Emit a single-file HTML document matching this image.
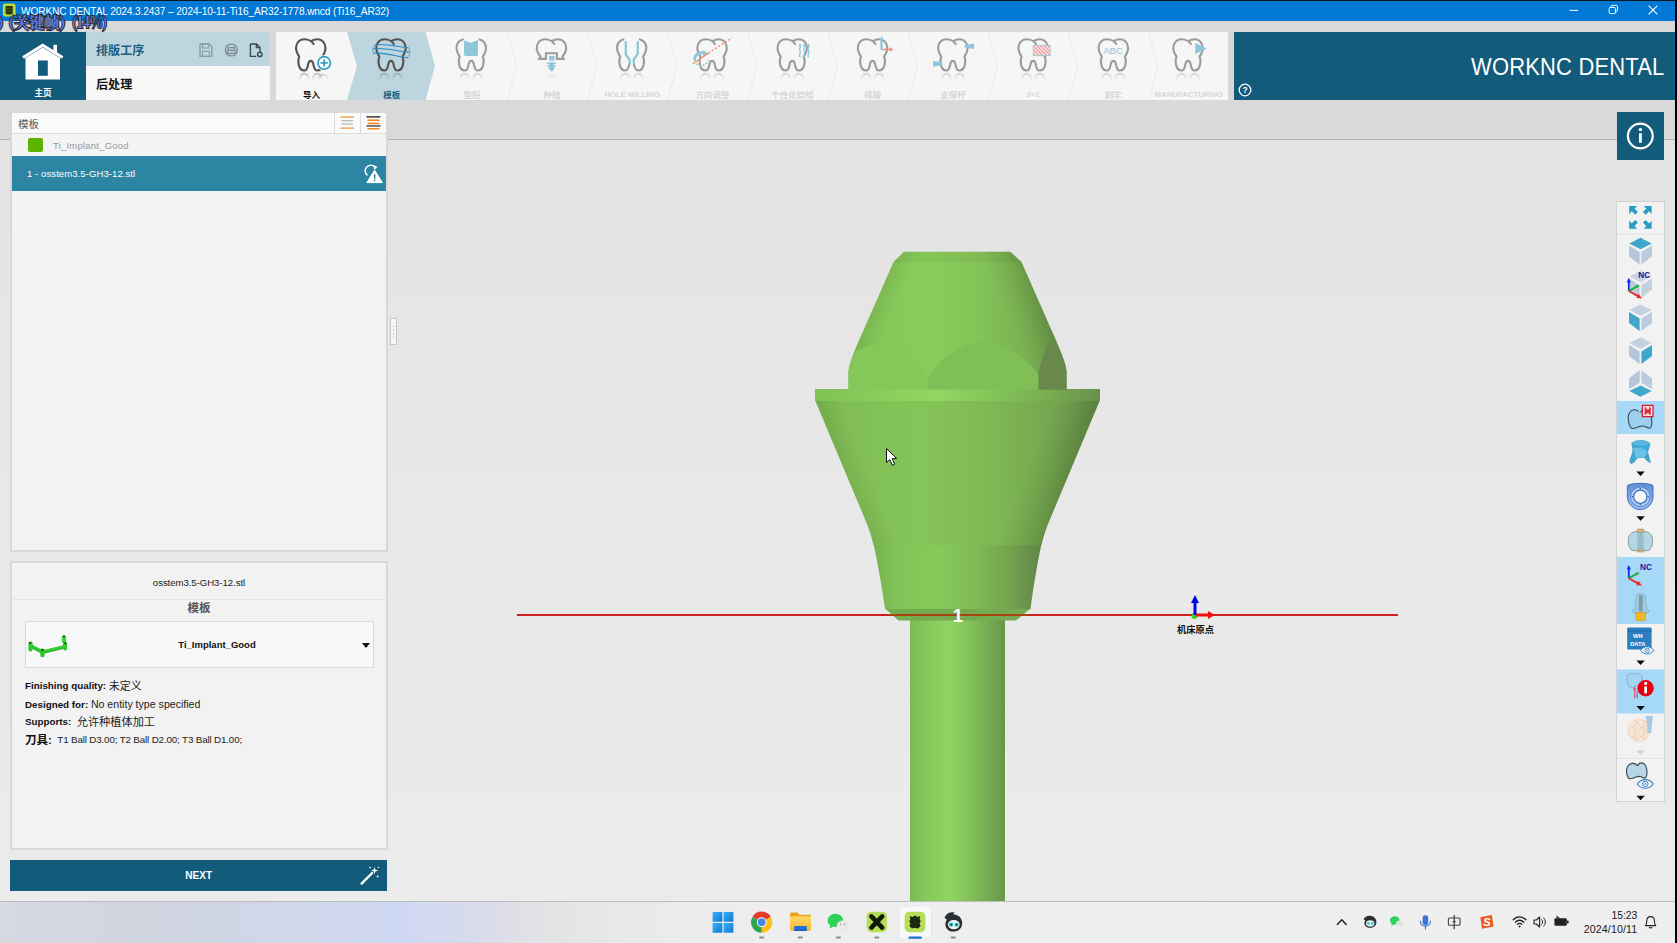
<!DOCTYPE html>
<html lang="zh">
<head>
<meta charset="utf-8">
<title>WORKNC DENTAL</title>
<style>
*{box-sizing:border-box;margin:0;padding:0}
html,body{width:1677px;height:943px;overflow:hidden;background:#e9e9e9;font-family:"Liberation Sans","Noto Sans CJK SC",sans-serif;}
.abs{position:absolute}
#root{position:relative;width:1677px;height:943px;overflow:hidden;background:linear-gradient(to bottom,#e3e3e3 140px,#e8e8e8 500px,#ebebeb 900px)}
#titlebar{left:0;top:0;width:1677px;height:21px;background:#0078d4;border-top:1px solid #101820}
#titletext{left:21px;top:5.8px;font-size:10.15px;color:#fff;white-space:nowrap;letter-spacing:-0.1px}
#overlay{left:0;top:11px;font-size:15px;font-weight:700;color:#6283f5;white-space:nowrap;font-family:"Noto Serif CJK SC","Liberation Serif",serif;height:24px;width:130px;
 -webkit-text-stroke:2.2px #2a2a2a;paint-order:stroke fill}
#overlay span{position:absolute;top:0;transform-origin:0 50%}
#band{left:0;top:21px;width:1677px;height:119px;background:#d9d9d9;border-bottom:1px solid #b4b4b4}
#home{left:0;top:32px;width:86px;height:68px;background:#135b7a}
#homelbl{left:0;top:85.5px;width:86px;text-align:center;color:#fff;font-size:8.6px;font-weight:bold}
#proc1{left:86px;top:32px;width:184px;height:34px;background:#bdd5df}
#proc2{left:86px;top:66px;width:184px;height:34px;background:#f7f7f7}
#proc1 span{position:absolute;left:10px;top:8.5px;font-size:12.1px;font-weight:bold;color:#1d5f7e}
#proc2 span{position:absolute;left:10px;top:8.5px;font-size:12.1px;font-weight:bold;color:#111}
#steps{left:276px;top:32px;width:952px;height:68px;background:#f6f6f6}
#brand{left:1234px;top:32px;width:443px;height:68px;background:#135b7a}
#brandtxt{right:12.7px;top:21.4px;color:#fff;font-size:24px;letter-spacing:0.2px;white-space:nowrap;transform:scaleX(0.915);transform-origin:100% 50%}
#info{left:1617px;top:112px;width:47px;height:48px;background:#135b7a}
#lp1{left:10px;top:112px;width:378px;height:440px;background:#f2f2f2;border:2px solid #d8d8d8;border-top-width:1px}
#lp1h{left:0;top:0;width:374px;height:21px;background:#fafafa;border-bottom:1px solid #dcdcdc}
#lp1h span{position:absolute;left:6px;top:3px;font-size:10.5px;color:#555}
#row1{left:0;top:21px;width:374px;height:22px;background:#f4f4f4}
#row2{left:0;top:43px;width:374px;height:35px;background:#2b85a3}
#lp2{left:10px;top:561px;width:378px;height:289px;background:#f2f2f2;border:2px solid #d8d8d8}
#next{left:10.4px;top:860px;width:376.6px;height:30.5px;background:#135b7a;color:#fff;font-size:10px;font-weight:bold;text-align:center;line-height:31px}
#rtb{left:1616px;top:201px;width:49px;height:601px;background:#f2f2f2;border:1px solid #d2d2d2}
#taskbar{left:0;top:901px;width:1677px;height:42px;background:linear-gradient(to right,#d6d9e2 0,#d1d5e0 150px,#d0d7ea 300px,#cfd8f3 400px,#d4d9ee 450px,#dcdde8 500px,#e3e3e6 545px,#e8e8e8 610px,#ececec 700px,#eeeeee 800px,#efefef 100%);border-top:1px solid #bdbdbd}
.ln{left:13px;font-size:9.8px;color:#222;white-space:nowrap;line-height:14px;height:14px}
.ln .cj{line-height:14px;display:inline-block;vertical-align:top;position:relative;top:-0.5px}
.ln b{color:#111}
.steplbl{position:absolute;top:89px;width:90px;text-align:center;font-size:7.5px;font-weight:bold;color:#dcdcdc;white-space:nowrap}
</style>
</head>
<body>
<div id="root">
<div id="band" class="abs"></div>
<div id="titlebar" class="abs"></div>
<svg class="abs" style="left:0;top:1px" width="1677" height="20" viewBox="0 1 1677 20" fill="none">
<rect x="2.8" y="3.6" width="12.8" height="12.8" rx="2.6" fill="#b9d83a"/><path d="M5.6 6 H12.8 V13.4 L11.4 14.4 H7 L5.6 13.4 Z" fill="#283814"/><path d="M5.6 8.4 H12.8 M5.6 10.8 H12.8" stroke="#566a26" stroke-width="0.6"/>
<path d="M1569.6 10.4 H1578.2" stroke="#fff" stroke-width="1"/>
<rect x="1609.2" y="7.4" width="6.2" height="6.2" rx="1" stroke="#fff" stroke-width="1"/><path d="M1611 7.2 V6.4 C1611 5.8 1611.4 5.4 1612 5.4 H1616.2 C1616.8 5.4 1617.4 5.8 1617.4 6.4 V10.6 C1617.4 11.2 1616.8 11.8 1616.2 11.8 H1615.6" stroke="#fff" stroke-width="1"/>
<path d="M1648.6 5.6 L1657.4 14.4 M1657.4 5.6 L1648.6 14.4" stroke="#fff" stroke-width="1.1"/>
</svg>
<div id="titletext" class="abs">WORKNC DENTAL 2024.3.2437 – 2024-10-11-Ti16_AR32-1778.wncd (Ti16_AR32)</div>
<!--VIEWPORT-->
<svg class="abs" style="left:0;top:0" width="1677" height="943" viewBox="0 0 1677 943">
<defs>
<linearGradient id="gTop" gradientUnits="userSpaceOnUse" x1="848" y1="0" x2="1067" y2="0">
<stop offset="0" stop-color="#7fbf54"/><stop offset="0.12" stop-color="#85c658"/><stop offset="0.38" stop-color="#8acc5c"/><stop offset="0.6" stop-color="#84c358"/><stop offset="0.8" stop-color="#7bb253"/><stop offset="0.93" stop-color="#71a04e"/><stop offset="1" stop-color="#6d994c"/>
</linearGradient>
<linearGradient id="gFl" gradientUnits="userSpaceOnUse" x1="815" y1="0" x2="1100" y2="0">
<stop offset="0" stop-color="#7ab851"/><stop offset="0.12" stop-color="#81bf55"/><stop offset="0.38" stop-color="#85c458"/><stop offset="0.6" stop-color="#7fba55"/><stop offset="0.8" stop-color="#76a950"/><stop offset="0.93" stop-color="#6e9b4d"/><stop offset="1" stop-color="#6b954c"/>
</linearGradient>
<linearGradient id="gRim" gradientUnits="userSpaceOnUse" x1="815" y1="0" x2="1100" y2="0">
<stop offset="0" stop-color="#80c255"/><stop offset="0.2" stop-color="#88cb5a"/><stop offset="0.42" stop-color="#92d663"/><stop offset="0.6" stop-color="#86c65a"/><stop offset="0.8" stop-color="#79b052"/><stop offset="1" stop-color="#688f4b"/>
</linearGradient>
<linearGradient id="gLow" gradientUnits="userSpaceOnUse" x1="873" y1="0" x2="1042" y2="0">
<stop offset="0" stop-color="#76b24f"/><stop offset="0.12" stop-color="#82c157"/><stop offset="0.38" stop-color="#88c95b"/><stop offset="0.6" stop-color="#80bc56"/><stop offset="0.8" stop-color="#73a54e"/><stop offset="0.93" stop-color="#678f4a"/><stop offset="1" stop-color="#638748"/>
</linearGradient>
<linearGradient id="gSh" gradientUnits="userSpaceOnUse" x1="910" y1="0" x2="1005" y2="0">
<stop offset="0" stop-color="#7ab952"/><stop offset="0.15" stop-color="#85c759"/><stop offset="0.42" stop-color="#90d461"/><stop offset="0.62" stop-color="#84c359"/><stop offset="0.85" stop-color="#74a850"/><stop offset="1" stop-color="#69964b"/>
</linearGradient>
<linearGradient id="eR1" gradientUnits="userSpaceOnUse" x1="1070.7" y1="472.5" x2="1031.8" y2="456.8"><stop offset="0" stop-color="#1a2a10" stop-opacity="0.2"/><stop offset="0.5" stop-color="#1a2a10" stop-opacity="0.07"/><stop offset="1" stop-color="#1a2a10" stop-opacity="0"/></linearGradient>
<linearGradient id="eL1" gradientUnits="userSpaceOnUse" x1="844.3" y1="472.5" x2="866.6" y2="463.5"><stop offset="0" stop-color="#1a2a10" stop-opacity="0.09"/><stop offset="1" stop-color="#1a2a10" stop-opacity="0"/></linearGradient>
<linearGradient id="eR2" gradientUnits="userSpaceOnUse" x1="1039.7" y1="303.5" x2="1007.7" y2="317.6"><stop offset="0" stop-color="#1a2a10" stop-opacity="0.17"/><stop offset="0.5" stop-color="#1a2a10" stop-opacity="0.06"/><stop offset="1" stop-color="#1a2a10" stop-opacity="0"/></linearGradient>
<linearGradient id="eL2" gradientUnits="userSpaceOnUse" x1="875.3" y1="303.5" x2="893.6" y2="311.5"><stop offset="0" stop-color="#1a2a10" stop-opacity="0.08"/><stop offset="1" stop-color="#1a2a10" stop-opacity="0"/></linearGradient>
</defs>
<!-- shaft -->
<rect x="910" y="618" width="95" height="283" fill="url(#gSh)"/>
<!-- bottom chamfer -->
<path d="M885 608.5 L1030.5 608.5 L1016 620.5 L898.5 620.5 Z" fill="#75ab50"/>
<!-- lower collar -->
<path d="M873.5 544 L1041.5 544 C1037 565 1033 590 1030.5 609 L885 609 C882.5 590 878 565 873.5 544 Z" fill="url(#gLow)"/>
<!-- flange cone -->
<path d="M815 400 L1100 400 L1048 524 C1045 532 1043 538 1041.5 545 L873.5 545 C872 538 870 532 867 524 Z" fill="url(#gFl)"/>
<path d="M815 400 L1100 400 L1048 524 C1045 532 1043 538 1041.5 545 L873.5 545 C872 538 870 532 867 524 Z" fill="url(#eR1)"/><path d="M815 400 L1100 400 L1048 524 C1045 532 1043 538 1041.5 545 L873.5 545 C872 538 870 532 867 524 Z" fill="url(#eL1)"/>
<!-- flange rim -->
<path d="M815 389 L1100 389 L1100 401 L815 401 Z" fill="url(#gRim)"/>
<!-- top cone -->
<path d="M904 251.8 L1010.5 251.8 L1021.5 262 L1058 345 C1063 357 1066 365 1066.5 372 L1066.5 389.5 L848.5 389.5 L848.5 372 C849 365 852 357 857 345 L893.5 262 Z" fill="url(#gTop)"/>
<path d="M904 251.8 L1010.5 251.8 L1021.5 262 L1058 345 C1063 357 1066 365 1066.5 372 L1066.5 389.5 L848.5 389.5 L848.5 372 C849 365 852 357 857 345 L893.5 262 Z" fill="url(#eR2)"/><path d="M904 251.8 L1010.5 251.8 L1021.5 262 L1058 345 C1063 357 1066 365 1066.5 372 L1066.5 389.5 L848.5 389.5 L848.5 372 C849 365 852 357 857 345 L893.5 262 Z" fill="url(#eL2)"/>
<!-- top chamfer shading -->
<path d="M904 251.8 L1010.5 251.8 L1021.5 262 L893.5 262 Z" fill="#000" opacity="0.035"/>
<!-- hex facets -->
<path d="M848.5 389.5 L848.5 372 C849 365 852 358 856 351 C868 345 886 342 899 343 C910 352 921 365 928 378 L928 389.5 Z" fill="#86c75a"/>
<path d="M928 389.5 L928 378 C940 358 960 344 981 341 C1004 344 1026 358 1038.5 374 L1038.5 389.5 Z" fill="#80bf56"/>
<path d="M1038.5 389.5 L1038.5 374 C1041 362 1044 352 1048 343 L1057 345 C1063 357 1066 365 1066.5 372 L1066.5 389.5 Z" fill="#68894b"/>
<!-- red line -->
<rect x="517" y="614" width="881" height="2" fill="#d01f1f"/>
<rect x="888" y="614" width="141" height="2" fill="#a9430f"/>
<text x="957.8" y="622.4" text-anchor="middle" font-family="Liberation Sans, sans-serif" font-size="18.5" font-weight="bold" fill="#fff">1</text>
<!-- origin marker -->
<circle cx="1194.5" cy="616" r="3" fill="#2fd32f"/>
<rect x="1193.5" y="602" width="3" height="13" fill="#0000e6"/>
<path d="M1191 603 L1195 595 L1199 603 Z" fill="#0000e6"/>
<rect x="1196" y="613.5" width="13" height="3" fill="#f01010"/>
<path d="M1208 611 L1215 615 L1208 619 Z" fill="#f01010"/>
<text x="1195.5" y="633.4" text-anchor="middle" font-family="Liberation Sans, Noto Sans CJK SC, sans-serif" font-size="9.3" font-weight="bold" fill="#111">机床原点</text>
<!-- cursor -->
<path d="M886.5 448.5 L886.5 462.5 L889.8 459.6 L892.3 465.3 L894.6 464.3 L892.2 458.7 L896.6 458.5 Z" fill="#fff" stroke="#111" stroke-width="1" stroke-linejoin="round"/>
</svg>
<!-- splitter handle -->
<div class="abs" style="left:390px;top:318px;width:7px;height:27px;background:#f6f6f6;border:1px solid #c6c6c6"></div>
<div class="abs" style="left:392.7px;top:325.6px;width:1.3px;height:1.3px;background:#9a9a9a;box-shadow:0 3.6px 0 #9a9a9a,0 7.2px 0 #9a9a9a,0 10.8px 0 #9a9a9a"></div>
<!--/VIEWPORT-->
<div id="home" class="abs"></div>
<svg class="abs" style="left:0;top:32px" width="86" height="68" viewBox="0 32 86 68">
<path d="M25.5 58 L42.7 47.5 L60 58 L60 79.5 L25.5 79.5 Z" fill="#fff"/>
<path d="M23 57.6 L42.7 45.2 L62.6 57.6" stroke="#fff" stroke-width="3" fill="none" stroke-linejoin="miter"/>
<rect x="53.4" y="44.8" width="3.6" height="9" fill="#fff"/>
<rect x="38" y="60.5" width="9.8" height="15.3" fill="#135b7a"/>
</svg>
<div id="homelbl" class="abs">主页</div>
<div id="proc1" class="abs"><span>排版工序</span></div>
<div id="proc2" class="abs"><span>后处理</span></div>
<svg class="abs" style="left:196px;top:40px" width="72" height="20" viewBox="196 40 72 20" fill="none">
<path d="M200 44 H209 L211.8 46.6 V56.4 H200 Z" stroke="#8b9aa3" stroke-width="1.4"/><rect x="202.4" y="44" width="6" height="4" stroke="#8b9aa3" stroke-width="1.1"/><rect x="202.4" y="51.2" width="7" height="5.2" stroke="#8b9aa3" stroke-width="1.1"/>
<circle cx="231.3" cy="50" r="5.9" stroke="#7d8b93" stroke-width="1.4"/><path d="M228.2 50.2 V47.6 H234.4 V50.2 M227.6 53.4 V50.4 H235 V53.4 Z" stroke="#7d8b93" stroke-width="1.1"/>
<path d="M250.4 44 H256.6 L260 47.4 V52 M256 56.4 H250.4 V44 M256.4 44 V47.6 H260" stroke="#3c4a52" stroke-width="1.4" stroke-linejoin="round"/><circle cx="259.8" cy="54.4" r="2.2" stroke="#3c4a52" stroke-width="1.5"/>
</svg>
<div id="steps" class="abs"></div>
<!--STEPS-->
<svg class="abs" style="left:276px;top:32px" width="952" height="68" viewBox="276 32 952 68">
<defs><linearGradient id="rfa" gradientUnits="userSpaceOnUse" x1="0" y1="35" x2="0" y2="42"><stop offset="0" stop-color="#777" stop-opacity="0.42"/><stop offset="1" stop-color="#777" stop-opacity="0"/></linearGradient><linearGradient id="rfb" gradientUnits="userSpaceOnUse" x1="0" y1="35" x2="0" y2="42"><stop offset="0" stop-color="#9a9a9a" stop-opacity="0.36"/><stop offset="1" stop-color="#9a9a9a" stop-opacity="0"/></linearGradient><linearGradient id="rfc" gradientUnits="userSpaceOnUse" x1="0" y1="35" x2="0" y2="42"><stop offset="0" stop-color="#5fae5f" stop-opacity="0.5"/><stop offset="1" stop-color="#5fae5f" stop-opacity="0"/></linearGradient></defs>
<path d="M347 32 L425.5 32 L435 66 L425.5 100 L347 100 L357 66 Z" fill="#bdd5df"/>
<path d="M507.3 32 L516.8 66 L507.3 100" stroke="#e9e9e9" stroke-width="1" fill="none"/>
<path d="M587.5 32 L597.0 66 L587.5 100" stroke="#e9e9e9" stroke-width="1" fill="none"/>
<path d="M667.6 32 L677.1 66 L667.6 100" stroke="#e9e9e9" stroke-width="1" fill="none"/>
<path d="M747.8 32 L757.2 66 L747.8 100" stroke="#e9e9e9" stroke-width="1" fill="none"/>
<path d="M827.9 32 L837.4 66 L827.9 100" stroke="#e9e9e9" stroke-width="1" fill="none"/>
<path d="M908.1 32 L917.6 66 L908.1 100" stroke="#e9e9e9" stroke-width="1" fill="none"/>
<path d="M988.2 32 L997.7 66 L988.2 100" stroke="#e9e9e9" stroke-width="1" fill="none"/>
<path d="M1068.3 32 L1077.8 66 L1068.3 100" stroke="#e9e9e9" stroke-width="1" fill="none"/>
<path d="M1148.5 32 L1158.0 66 L1148.5 100" stroke="#e9e9e9" stroke-width="1" fill="none"/>
<path d="M1228.7 32 L1238.2 66 L1228.7 100" stroke="#e9e9e9" stroke-width="1" fill="none"/>
<g transform="translate(295.0 38.3)" fill="none" stroke-linecap="round" stroke-linejoin="round"><path d="M18.6 5.8 C17.5 3.8 14 0.9 9.3 0.9 C4 0.9 1 5 1 9.8 C1 13.5 2.6 16 4.2 18.4 C3.2 20.5 3.2 23 3.5 25.2 C4 29 6 32.2 9.5 32.2 C12.5 32.2 12.6 28 13.3 25.2 C13.8 23.4 14.6 22.6 15.75 22.6 C16.9 22.6 17.7 23.4 18.2 25.2 C18.9 28 19 32.2 22 32.2 C25.5 32.2 27.5 29 28 25.2 C28.3 23 28.3 20.5 27.3 18.4 C28.9 16 30.5 13.5 30.5 9.8 C30.5 5 27.5 0.9 22.2 0.9 C19.8 0.9 17.8 1.6 16.4 2.8" stroke="#555" stroke-width="2.1"/><path d="M4.4 42 C5.4 33.4 13 33.4 14 42" stroke="url(#rfa)" stroke-width="2" fill="none" stroke-linecap="butt"/><path d="M17.5 42 C18.5 33.4 26.1 33.4 27.1 42" stroke="url(#rfa)" stroke-width="2" fill="none" stroke-linecap="butt"/><path d="M22.4 42 C24 34.6 31.6 34.6 33.4 42" stroke="url(#rfc)" stroke-width="1.3"/><circle cx="29.2" cy="24.6" r="8" fill="#f6f6f6" stroke="none"/><circle cx="29.2" cy="24.6" r="6.2" fill="#fff" stroke="#2f9fc2" stroke-width="1.7"/><path d="M25.6 24.6 H32.8 M29.2 21 V28.2" stroke="#2f9fc2" stroke-width="1.8" stroke-linecap="butt"/></g>
<g transform="translate(375.2 38.3)" fill="none" stroke-linecap="round" stroke-linejoin="round"><path d="M18.6 5.8 C17.5 3.8 14 0.9 9.3 0.9 C4 0.9 1 5 1 9.8 C1 13.5 2.6 16 4.2 18.4 C3.2 20.5 3.2 23 3.5 25.2 C4 29 6 32.2 9.5 32.2 C12.5 32.2 12.6 28 13.3 25.2 C13.8 23.4 14.6 22.6 15.75 22.6 C16.9 22.6 17.7 23.4 18.2 25.2 C18.9 28 19 32.2 22 32.2 C25.5 32.2 27.5 29 28 25.2 C28.3 23 28.3 20.5 27.3 18.4 C28.9 16 30.5 13.5 30.5 9.8 C30.5 5 27.5 0.9 22.2 0.9 C19.8 0.9 17.8 1.6 16.4 2.8" stroke="#555" stroke-width="2.1"/><path d="M4.4 42 C5.4 33.4 13 33.4 14 42" stroke="url(#rfa)" stroke-width="2" fill="none" stroke-linecap="butt"/><path d="M17.5 42 C18.5 33.4 26.1 33.4 27.1 42" stroke="url(#rfa)" stroke-width="2" fill="none" stroke-linecap="butt"/><path d="M0 6.5 C10 5.0 22 8.5 33 9.5" stroke="#2b8dc4" stroke-width="1.1"/><path d="M-2 10.5 C10 9.0 22 13 34 14" stroke="#2b8dc4" stroke-width="1.1"/><path d="M-1.5 15 C10 13.5 22 18.5 32 19.5" stroke="#2b8dc4" stroke-width="1.1"/><path d="M0 6.5 C-3 9 -3 13 -1.5 15 M33 9.5 C36 12 35 17 32 19.5" stroke="#2b8dc4" stroke-width="0.9" opacity="0.7"/></g>
<g transform="translate(455.5 38.3)" fill="none" stroke-linecap="round" stroke-linejoin="round"><path d="M7.4 1.1 C3.4 2.2 1 5.6 1 9.8 C1 13.5 2.6 16 4.2 18.4 C3.2 20.5 3.2 23 3.5 25.2 C4 29 6 32.2 9.5 32.2 C12.5 32.2 12.6 28 13.3 25.2 C13.8 23.4 14.6 22.6 15.75 22.6" stroke="#9c9c9c" stroke-width="2.1"/><path d="M24 1.1 C28 2.2 30.5 5.6 30.5 9.8 C30.5 13.5 28.9 16 27.3 18.4 C28.3 20.5 28.3 23 28 25.2 C27.5 29 25.5 32.2 22 32.2 C19 32.2 18.9 28 18.2 25.2 C17.7 23.4 16.9 22.6 15.75 22.6" stroke="#9c9c9c" stroke-width="2.1"/><path d="M8.5 2.1 L15.4 4.5 L22.5 1.8 L22.5 15.4 C22.5 17 21.7 17.7 20.2 17.7 L10.8 17.7 C9.3 17.7 8.5 17 8.5 15.4 Z" fill="#8ec6da" stroke="none"/><path d="M4.4 42 C5.4 33.4 13 33.4 14 42" stroke="url(#rfb)" stroke-width="2" fill="none" stroke-linecap="butt"/><path d="M17.5 42 C18.5 33.4 26.1 33.4 27.1 42" stroke="url(#rfb)" stroke-width="2" fill="none" stroke-linecap="butt"/></g>
<g transform="translate(535.7 38.3)" fill="none" stroke-linecap="round" stroke-linejoin="round"><path d="M18.6 5.8 C17.5 3.8 14 0.9 9.3 0.9 C4 0.9 1 5 1 9.8 C1 13.5 2.8 16 4.8 18.2 L3.6 20.6 L10.2 20.6 L10.2 14.9 L21.2 14.9 L21.2 20.6 L27.9 20.6 L26.7 18.2 C28.7 16 30.5 13.5 30.5 9.8 C30.5 5 27.5 0.9 22.2 0.9 C19.8 0.9 17.8 1.6 16.4 2.8" stroke="#9c9c9c" stroke-width="2.1" stroke-linejoin="miter"/><rect x="13.4" y="17.7" width="5.4" height="4.6" fill="#8ec6da" stroke="none"/><path d="M11 24.4 H20.6 V25.7 H11 Z M11.6 26.8 H20 V28.1 H11.6 Z M12.6 29.2 H19 V30.5 H12.6 Z M13.6 24 H18.2 V31.2 L15.9 33.4 L13.6 31.2 Z" fill="#8ec6da" stroke="none"/><path d="M13.4 36.4 H18.4 M12.4 38.6 H19.4" stroke="#8ec6da" stroke-width="1.1" opacity="0.28"/></g>
<g transform="translate(616.0 38.3)" fill="none" stroke-linecap="round" stroke-linejoin="round"><path d="M7.4 1.1 C3.4 2.2 1 5.6 1 9.8 C1 13.5 2.6 16 4.2 18.4 C3.2 20.5 3.2 23 3.5 25.2 C4 29 6 32.2 9.2 32.2 C12 32.2 12.8 28.6 13.4 25.8" stroke="#9c9c9c" stroke-width="2.1"/><path d="M23.9 1.1 C27.9 2.2 30.3 5.6 30.3 9.8 C30.3 13.5 28.7 16 27.1 18.4 C28.1 20.5 28.1 23 27.8 25.2 C27.3 29 25.3 32.2 22.1 32.2 C19.3 32.2 18.5 28.6 17.9 25.8" stroke="#9c9c9c" stroke-width="2.1"/><path d="M9.8 3 V16.2 L13.7 21.6 V25.4 M21.8 3 V15.4 L17.8 21.2 V25.4" stroke="#8ec6da" stroke-width="2.3" stroke-linecap="butt" stroke-linejoin="round"/><path d="M4.4 42 C5.4 33.4 13 33.4 14 42" stroke="url(#rfb)" stroke-width="2" fill="none" stroke-linecap="butt"/><path d="M17.5 42 C18.5 33.4 26.1 33.4 27.1 42" stroke="url(#rfb)" stroke-width="2" fill="none" stroke-linecap="butt"/></g>
<g transform="translate(696.3 38.3)" fill="none" stroke-linecap="round" stroke-linejoin="round"><path d="M18.6 5.8 C17.5 3.8 14 0.9 9.3 0.9 C4 0.9 1 5 1 9.8 C1 13.5 2.6 16 4.2 18.4 C3.2 20.5 3.2 23 3.5 25.2 C4 29 6 32.2 9.5 32.2 C12.5 32.2 12.6 28 13.3 25.2 C13.8 23.4 14.6 22.6 15.75 22.6 C16.9 22.6 17.7 23.4 18.2 25.2 C18.9 28 19 32.2 22 32.2 C25.5 32.2 27.5 29 28 25.2 C28.3 23 28.3 20.5 27.3 18.4 C28.9 16 30.5 13.5 30.5 9.8 C30.5 5 27.5 0.9 22.2 0.9 C19.8 0.9 17.8 1.6 16.4 2.8" stroke="#9c9c9c" stroke-width="2.1"/><path d="M4.4 42 C5.4 33.4 13 33.4 14 42" stroke="url(#rfb)" stroke-width="2" fill="none" stroke-linecap="butt"/><path d="M17.5 42 C18.5 33.4 26.1 33.4 27.1 42" stroke="url(#rfb)" stroke-width="2" fill="none" stroke-linecap="butt"/><path d="M-1.4 22.4 C-2.4 17.6 1.6 13.6 7.4 14.4" stroke="#8ec6da" stroke-width="2.8" stroke-linecap="butt"/><path d="M7 11.6 L12.6 16.2 L6.4 17.6 Z" fill="#8ec6da" stroke="none"/><path d="M0.4 25.4 C3 28.8 9 28.6 11.8 21.6" stroke="#8ec6da" stroke-width="1.7" stroke-dasharray="1.7 1.7" stroke-linecap="butt"/><path d="M-3.5 25.7 L11.9 14.8" stroke="#f0956e" stroke-width="1.5" stroke-linecap="butt"/><path d="M11.9 14.8 L35.8 -0.3" stroke="#f0956e" stroke-width="1.5" stroke-dasharray="2 2" stroke-linecap="butt"/></g>
<g transform="translate(776.5 38.3)" fill="none" stroke-linecap="round" stroke-linejoin="round"><path d="M18.6 5.8 C17.5 3.8 14 0.9 9.3 0.9 C4 0.9 1 5 1 9.8 C1 13.5 2.6 16 4.2 18.4 C3.2 20.5 3.2 23 3.5 25.2 C4 29 6 32.2 9.5 32.2 C12.5 32.2 12.6 28 13.3 25.2 C13.8 23.4 14.6 22.6 15.75 22.6 C16.9 22.6 17.7 23.4 18.2 25.2 C18.9 28 19 32.2 22 32.2 C25.5 32.2 27.5 29 28 25.2 C28.3 23 28.3 20.5 27.3 18.4 C28.9 16 30.5 13.5 30.5 9.8 C30.5 5 27.5 0.9 22.2 0.9 C19.8 0.9 17.8 1.6 16.4 2.8" stroke="#9c9c9c" stroke-width="2.1"/><path d="M4.4 42 C5.4 33.4 13 33.4 14 42" stroke="url(#rfb)" stroke-width="2" fill="none" stroke-linecap="butt"/><path d="M17.5 42 C18.5 33.4 26.1 33.4 27.1 42" stroke="url(#rfb)" stroke-width="2" fill="none" stroke-linecap="butt"/><path d="M23.5 6.5 C25.5 8.5 21.5 10.5 23.5 12.5 C25.5 14.5 21.5 16.5 23.5 18.5" stroke="#8ec6da" stroke-width="1.3"/><path d="M22.0 8 L23.3 5.5 L25.1 7.6 Z" fill="#8ec6da" stroke="none"/><path d="M27.8 6.5 C29.8 8.5 25.8 10.5 27.8 12.5 C29.8 14.5 25.8 16.5 27.8 18.5" stroke="#8ec6da" stroke-width="1.3"/><path d="M26.3 8 L27.6 5.5 L29.400000000000002 7.6 Z" fill="#8ec6da" stroke="none"/><path d="M32 6.5 C34 8.5 30 10.5 32 12.5 C34 14.5 30 16.5 32 18.5" stroke="#8ec6da" stroke-width="1.3"/><path d="M30.5 8 L31.8 5.5 L33.6 7.6 Z" fill="#8ec6da" stroke="none"/></g>
<g transform="translate(856.8 38.3)" fill="none" stroke-linecap="round" stroke-linejoin="round"><path d="M18.6 5.8 C17.5 3.8 14 0.9 9.3 0.9 C4 0.9 1 5 1 9.8 C1 13.5 2.6 16 4.2 18.4 C3.2 20.5 3.2 23 3.5 25.2 C4 29 6 32.2 9.5 32.2 C12.5 32.2 12.6 28 13.3 25.2 C13.8 23.4 14.6 22.6 15.75 22.6 C16.9 22.6 17.7 23.4 18.2 25.2 C18.9 28 19 32.2 22 32.2 C25.5 32.2 27.5 29 28 25.2 C28.3 23 28.3 20.5 27.3 18.4 C28.9 16 30.5 13.5 30.5 9.8 C30.5 5 27.5 0.9 22.2 0.9 C19.8 0.9 17.8 1.6 16.4 2.8" stroke="#9c9c9c" stroke-width="2.1"/><path d="M4.4 42 C5.4 33.4 13 33.4 14 42" stroke="url(#rfb)" stroke-width="2" fill="none" stroke-linecap="butt"/><path d="M17.5 42 C18.5 33.4 26.1 33.4 27.1 42" stroke="url(#rfb)" stroke-width="2" fill="none" stroke-linecap="butt"/><rect x="23.6" y="0.2" width="2.2" height="11.6" fill="#8ec6da" stroke="none"/><path d="M22.6 1.6 L24.7 -2 L26.8 1.6 Z" fill="#8ec6da" stroke="none"/><rect x="25.8" y="10.4" width="8" height="1.5" fill="#f08a8a" stroke="none"/><path d="M33 8.9 L36.6 11.1 L33 13.4 Z" fill="#f08a8a" stroke="none"/></g>
<g transform="translate(937.1 38.3)" fill="none" stroke-linecap="round" stroke-linejoin="round"><path d="M18.6 5.8 C17.5 3.8 14 0.9 9.3 0.9 C4 0.9 1 5 1 9.8 C1 13.5 2.6 16 4.2 18.4 C3.2 20.5 3.2 23 3.5 25.2 C4 29 6 32.2 9.5 32.2 C12.5 32.2 12.6 28 13.3 25.2 C13.8 23.4 14.6 22.6 15.75 22.6 C16.9 22.6 17.7 23.4 18.2 25.2 C18.9 28 19 32.2 22 32.2 C25.5 32.2 27.5 29 28 25.2 C28.3 23 28.3 20.5 27.3 18.4 C28.9 16 30.5 13.5 30.5 9.8 C30.5 5 27.5 0.9 22.2 0.9 C19.8 0.9 17.8 1.6 16.4 2.8" stroke="#9c9c9c" stroke-width="2.1"/><path d="M4.4 42 C5.4 33.4 13 33.4 14 42" stroke="url(#rfb)" stroke-width="2" fill="none" stroke-linecap="butt"/><path d="M17.5 42 C18.5 33.4 26.1 33.4 27.1 42" stroke="url(#rfb)" stroke-width="2" fill="none" stroke-linecap="butt"/><path d="M27.6 6.8 L37 5.2 L37 10.8 L27.6 9.2 Z" fill="#8ec6da" stroke="none"/><path d="M5.2 23.9 L-4 22.6 L-4 28.4 L5.2 26.6 Z" fill="#8ec6da" stroke="none"/></g>
<g transform="translate(1017.4 38.3)" fill="none" stroke-linecap="round" stroke-linejoin="round"><path d="M18.6 5.8 C17.5 3.8 14 0.9 9.3 0.9 C4 0.9 1 5 1 9.8 C1 13.5 2.6 16 4.2 18.4 C3.2 20.5 3.2 23 3.5 25.2 C4 29 6 32.2 9.5 32.2 C12.5 32.2 12.6 28 13.3 25.2 C13.8 23.4 14.6 22.6 15.75 22.6 C16.9 22.6 17.7 23.4 18.2 25.2 C18.9 28 19 32.2 22 32.2 C25.5 32.2 27.5 29 28 25.2 C28.3 23 28.3 20.5 27.3 18.4 C28.9 16 30.5 13.5 30.5 9.8 C30.5 5 27.5 0.9 22.2 0.9 C19.8 0.9 17.8 1.6 16.4 2.8" stroke="#9c9c9c" stroke-width="2.1"/><path d="M4.4 42 C5.4 33.4 13 33.4 14 42" stroke="url(#rfb)" stroke-width="2" fill="none" stroke-linecap="butt"/><path d="M17.5 42 C18.5 33.4 26.1 33.4 27.1 42" stroke="url(#rfb)" stroke-width="2" fill="none" stroke-linecap="butt"/><defs><pattern id="hat" width="2.6" height="2.6" patternUnits="userSpaceOnUse" patternTransform="rotate(-45)"><rect width="2.6" height="2.6" fill="#fbeaea"/><rect width="1.2" height="2.6" fill="#ee9a9a"/></pattern></defs><rect x="16.3" y="7" width="16.4" height="10.4" fill="url(#hat)" stroke="#8ec6da" stroke-width="0.9"/></g>
<g transform="translate(1097.6 38.3)" fill="none" stroke-linecap="round" stroke-linejoin="round"><path d="M18.6 5.8 C17.5 3.8 14 0.9 9.3 0.9 C4 0.9 1 5 1 9.8 C1 13.5 2.6 16 4.2 18.4 C3.2 20.5 3.2 23 3.5 25.2 C4 29 6 32.2 9.5 32.2 C12.5 32.2 12.6 28 13.3 25.2 C13.8 23.4 14.6 22.6 15.75 22.6 C16.9 22.6 17.7 23.4 18.2 25.2 C18.9 28 19 32.2 22 32.2 C25.5 32.2 27.5 29 28 25.2 C28.3 23 28.3 20.5 27.3 18.4 C28.9 16 30.5 13.5 30.5 9.8 C30.5 5 27.5 0.9 22.2 0.9 C19.8 0.9 17.8 1.6 16.4 2.8" stroke="#9c9c9c" stroke-width="2.1"/><path d="M4.4 42 C5.4 33.4 13 33.4 14 42" stroke="url(#rfb)" stroke-width="2" fill="none" stroke-linecap="butt"/><path d="M17.5 42 C18.5 33.4 26.1 33.4 27.1 42" stroke="url(#rfb)" stroke-width="2" fill="none" stroke-linecap="butt"/><text x="15.5" y="15.6" text-anchor="middle" font-family="Liberation Sans, sans-serif" font-size="9.6" fill="#8ec6da" stroke="none">ABC</text></g>
<g transform="translate(1172.3 38.3)" fill="none" stroke-linecap="round" stroke-linejoin="round"><path d="M18.6 5.8 C17.5 3.8 14 0.9 9.3 0.9 C4 0.9 1 5 1 9.8 C1 13.5 2.6 16 4.2 18.4 C3.2 20.5 3.2 23 3.5 25.2 C4 29 6 32.2 9.5 32.2 C12.5 32.2 12.6 28 13.3 25.2 C13.8 23.4 14.6 22.6 15.75 22.6 C16.9 22.6 17.7 23.4 18.2 25.2 C18.9 28 19 32.2 22 32.2 C25.5 32.2 27.5 29 28 25.2 C28.3 23 28.3 20.5 27.3 18.4 C28.9 16 30.5 13.5 30.5 9.8 C30.5 5 27.5 0.9 22.2 0.9 C19.8 0.9 17.8 1.6 16.4 2.8" stroke="#9c9c9c" stroke-width="2.1"/><path d="M4.4 42 C5.4 33.4 13 33.4 14 42" stroke="url(#rfb)" stroke-width="2" fill="none" stroke-linecap="butt"/><path d="M17.5 42 C18.5 33.4 26.1 33.4 27.1 42" stroke="url(#rfb)" stroke-width="2" fill="none" stroke-linecap="butt"/><path d="M23 4.6 L34.6 10.2 L23 15.8 Z" fill="#8ec6da" stroke="none"/></g>
</svg>
<div class="steplbl" style="left:266.5px;color:#111;font-size:8.5px;top:88px">导入</div>
<div class="steplbl" style="left:346.8px;color:#1d5f7e;font-size:8.5px;top:88px">模板</div>
<div class="steplbl" style="left:427.0px;color:#d6d6d6;font-size:8.5px;top:88px">型腔</div>
<div class="steplbl" style="left:507.1px;color:#d6d6d6;font-size:8.5px;top:88px">种植</div>
<div class="steplbl" style="left:587.2px;color:#d6d6d6;font-size:7.75px;top:89.5px">HOLE MILLING</div>
<div class="steplbl" style="left:667.4px;color:#d6d6d6;font-size:8.5px;top:88px">方向调整</div>
<div class="steplbl" style="left:747.5px;color:#d6d6d6;font-size:8.5px;top:88px">个性化烧结</div>
<div class="steplbl" style="left:827.7px;color:#d6d6d6;font-size:8.5px;top:88px">排版</div>
<div class="steplbl" style="left:907.9px;color:#d6d6d6;font-size:8.5px;top:88px">支撑杆</div>
<div class="steplbl" style="left:988.0px;color:#d6d6d6;font-size:7.75px;top:89.5px">3+2</div>
<div class="steplbl" style="left:1068.2px;color:#d6d6d6;font-size:8.5px;top:88px">刻字</div>
<div class="steplbl" style="left:1143.8px;color:#d6d6d6;font-size:7.75px;top:89.5px">MANUFACTURING</div>
<!--/STEPS-->
<div id="brand" class="abs"><div id="brandtxt" class="abs">WORKNC DENTAL</div><svg class="abs" style="left:3px;top:50px" width="16" height="16" viewBox="0 0 16 16"><circle cx="8" cy="8" r="5.8" fill="none" stroke="#fff" stroke-width="1.3"/><text x="8" y="11.2" text-anchor="middle" font-family="Liberation Sans, sans-serif" font-size="8.6" font-weight="bold" fill="#fff">?</text></svg></div>
<div id="info" class="abs"><svg width="47" height="48" viewBox="0 0 47 48"><circle cx="23.3" cy="24" r="12.4" fill="none" stroke="#fff" stroke-width="2.2"/><rect x="22" y="21.2" width="2.8" height="9.6" fill="#fff"/><circle cx="23.4" cy="17.6" r="1.7" fill="#fff"/></svg></div>
<div id="lp1" class="abs">
 <div id="lp1h" class="abs"><span>模板</span>
  <div class="abs" style="left:322px;top:0;width:1px;height:21px;background:#dcdcdc"></div>
  <div class="abs" style="left:348px;top:0;width:1px;height:21px;background:#dcdcdc"></div>
  <svg class="abs" style="left:324.6px;top:0" width="48" height="21" viewBox="337 113 48 21">
   <rect x="340.5" y="116.3" width="13.5" height="1.5" fill="#f2a65a"/><rect x="341.5" y="120" width="11.5" height="1.3" fill="#b9b9b9"/><rect x="341.5" y="123.4" width="11.5" height="1.3" fill="#b9b9b9"/><rect x="340.5" y="127.4" width="13.5" height="1.5" fill="#f2a65a"/>
   <rect x="366.5" y="116" width="14" height="1.7" fill="#54504c"/><rect x="367.5" y="119.4" width="12" height="1.6" fill="#f08a24"/><rect x="367.5" y="122.6" width="12" height="1.6" fill="#f08a24"/><rect x="366.5" y="125.2" width="14" height="1.5" fill="#54504c"/><rect x="367.5" y="128" width="12" height="1.5" fill="#f08a24"/>
  </svg>
 </div>
 <div id="row1" class="abs"><div class="abs" style="left:16px;top:4px;width:15px;height:14px;border-radius:2px;background:#5ab400"></div><span class="abs" style="left:41px;top:6px;font-size:9.5px;color:#9a9a9a;letter-spacing:0.22px;white-space:nowrap" id="t_row1">Ti_Implant_Good</span></div>
 <div id="row2" class="abs"><span class="abs" style="left:15px;top:12.3px;font-size:9.5px;color:#fff;letter-spacing:0.09px;white-space:nowrap" id="t_row2">1 - osstem3.5-GH3-12.stl</span>
  <svg class="abs" style="left:349px;top:6px" width="24" height="24" viewBox="360 162 24 24" fill="none">
   <path d="M366.5 175.5 C363.8 173.5 363.3 169.3 366 166.8 C368.4 164.6 372.3 164.8 374.4 167.4" stroke="#fff" stroke-width="1.5"/><path d="M372.5 165 L376.5 167 L373.2 170 Z" fill="#fff"/>
   <path d="M373.6 170.2 L381.4 182.6 L365.8 182.6 Z" fill="#fff" stroke="#fff" stroke-width="1" stroke-linejoin="round"/><rect x="372.9" y="174.2" width="1.5" height="4.6" fill="#2b85a3"/><rect x="372.9" y="179.6" width="1.5" height="1.5" fill="#2b85a3"/>
  </svg>
 </div>
</div>
<div id="lp2" class="abs">
 <div class="abs" style="left:0;top:13.6px;width:374px;text-align:center;font-size:9.6px;color:#222;letter-spacing:-0.05px" id="t_fn">osstem3.5-GH3-12.stl</div>
 <div class="abs" style="left:0;top:36px;width:374px;height:1px;background:#e6e6e6"></div>
 <div class="abs" style="left:0;top:36px;width:374px;text-align:center;font-size:11.5px;font-weight:bold;color:#555">模板</div>
 <div class="abs" style="left:13px;top:58px;width:349px;height:47px;background:#f8f8f8;border:1px solid #dadada"></div>
 <svg class="abs" style="left:13px;top:68px" width="48" height="30" viewBox="24 631 48 30" fill="none">
  <path d="M30 646.2 L41.4 652.2 L63.8 646.8" stroke="#2cbc2c" stroke-width="3.6" stroke-linejoin="round"/>
  <path d="M30 645.4 L41.4 651.4 L63.8 646" stroke="#36d236" stroke-width="1.6" stroke-linejoin="round"/>
  <rect x="27.4" y="641.6" width="4.2" height="9.8" rx="2" fill="#30c830"/><rect x="39.3" y="648.4" width="4.3" height="8.8" rx="2" fill="#2ec42e"/>
  <rect x="60.8" y="635.2" width="4.3" height="8.4" rx="2" fill="#3ad63a"/><rect x="62" y="642" width="4.1" height="8.6" rx="2" fill="#30c830"/>
  <ellipse cx="29" cy="642.9" rx="1.2" ry="0.9" fill="#0c4e0c"/><ellipse cx="41.4" cy="650" rx="1.3" ry="1" fill="#0c4e0c"/><ellipse cx="63" cy="636.4" rx="1.2" ry="0.9" fill="#0c4e0c"/><ellipse cx="64.4" cy="643.2" rx="1.2" ry="0.9" fill="#0c4e0c"/>
 </svg>
 <div class="abs" style="left:60px;top:76.4px;width:290px;text-align:center;font-size:9.5px;font-weight:bold;color:#111;letter-spacing:0" id="t_dd">Ti_Implant_Good</div>
 <div class="abs" style="left:350px;top:80px;width:0;height:0;border-left:4.5px solid transparent;border-right:4.5px solid transparent;border-top:5px solid #111"></div>
 <div class="abs ln" style="top:116px"><b id="t_l1">Finishing quality:</b> <span class="cj" style="font-size:11px">未定义</span></div>
 <div class="abs ln" style="top:134px"><b id="t_l2">Designed for:</b> <span id="t_l2b" style="font-size:10.6px">No entity type specified</span></div>
 <div class="abs ln" style="top:152px"><b id="t_l3">Supports:</b>&nbsp; <span class="cj" style="font-size:11.2px">允许种植体加工</span></div>
 <div class="abs ln" style="top:170px"><b class="cj" style="font-size:11.5px">刀具:</b>&nbsp; <span id="t_l4" style="letter-spacing:-0.15px;font-size:9.8px">T1 Ball D3.00; T2 Ball D2.00; T3 Ball D1.00;</span></div>
</div>
<div id="next" class="abs">NEXT<svg class="abs" style="left:348px;top:5px" width="24" height="22" viewBox="359 865 24 22" fill="none"><path d="M362.6 883.6 L373.2 873" stroke="#fff" stroke-width="2.4" stroke-linecap="round"/><path d="M375.6 867 L376.4 869.8 L379.2 870.6 L376.4 871.4 L375.6 874.2 L374.8 871.4 L372 870.6 L374.8 869.8 Z" fill="#fff"/><circle cx="378.6" cy="876.4" r="0.9" fill="#fff"/><circle cx="371" cy="867.6" r="0.8" fill="#fff"/><circle cx="379.4" cy="867.4" r="0.7" fill="#fff"/></svg></div>
<div id="rtb" class="abs"></div>
<!--RTB-->
<svg class="abs" style="left:1616px;top:201px" width="49" height="601" viewBox="1616 201 49 601">
<rect x="1617" y="401" width="47" height="33" fill="#a6d9f7"/>
<rect x="1617" y="557" width="47" height="67" fill="#a6d9f7"/>
<rect x="1617" y="669.5" width="47" height="44" fill="#a6d9f7"/>
<rect x="1617" y="233.5" width="47" height="1" fill="#e4e4e4"/>
<rect x="1617" y="758" width="47" height="1" fill="#e4e4e4"/>
<path d="M1629.2 205.9 L1637.2 205.9 L1629.2 213.9 Z" fill="#2b9cc6"/><path d="M1632.8 209.5 L1636.5 213.4" stroke="#2b9cc6" stroke-width="3.8"/>
<path d="M1651.6 205.9 L1643.6 205.9 L1651.6 213.9 Z" fill="#2b9cc6"/><path d="M1648.0 209.5 L1644.3 213.4" stroke="#2b9cc6" stroke-width="3.8"/>
<path d="M1629.2 228.7 L1637.2 228.7 L1629.2 220.7 Z" fill="#2b9cc6"/><path d="M1632.8 225.1 L1636.5 221.2" stroke="#2b9cc6" stroke-width="3.8"/>
<path d="M1651.6 228.7 L1643.6 228.7 L1651.6 220.7 Z" fill="#2b9cc6"/><path d="M1648.0 225.1 L1644.3 221.2" stroke="#2b9cc6" stroke-width="3.8"/>
<path d="M1640.5 237.8 L1651.7 243.5 L1640.5 249.20000000000002 L1629.3 243.5 Z" fill="#3fa6cc"/><path d="M1629.0 245.4 L1639.6 251.90000000000003 L1639.6 264.40000000000003 L1629.0 256.40000000000003 Z" fill="#b4c6da"/><path d="M1652.0 245.4 L1641.4 251.90000000000003 L1641.4 264.40000000000003 L1652.0 256.40000000000003 Z" fill="#bccbdd"/>
<g opacity="0.85"><path d="M1640.5 270.8 L1651.7 276.5 L1640.5 282.2 L1629.3 276.5 Z" fill="#c3d1e0"/><path d="M1629.0 278.4 L1639.6 284.9 L1639.6 297.4 L1629.0 289.4 Z" fill="#b4c6da"/><path d="M1652.0 278.4 L1641.4 284.9 L1641.4 297.4 L1652.0 289.4 Z" fill="#bccbdd"/></g>
<text x="1644.2" y="277.8" text-anchor="middle" font-family="Liberation Sans, sans-serif" font-size="8.2" font-weight="bold" fill="#16169c">NC</text>
<path d="M1628.8 291 L1628.8 281.5" stroke="#1030e0" stroke-width="1.8"/><path d="M1626.6 282.4 L1628.8 277.8 L1631.0 282.4 Z" fill="#1030e0"/><path d="M1628.8 291 L1637.2 286.4" stroke="#22b040" stroke-width="2"/><path d="M1635.3999999999999 285.2 L1639.6 285 L1637.2 288.4 Z" fill="#22b040"/><path d="M1628.8 291 L1638.3999999999999 296.4" stroke="#e82828" stroke-width="1.8"/><path d="M1638.3999999999999 293.8 L1642.0 298.4 L1636.3999999999999 298 Z" fill="#e82828"/>
<path d="M1640.5 304.4 L1651.7 310.09999999999997 L1640.5 315.79999999999995 L1629.3 310.09999999999997 Z" fill="#c3d1e0"/><path d="M1629.0 311.99999999999994 L1639.6 318.49999999999994 L1639.6 330.99999999999994 L1629.0 322.99999999999994 Z" fill="#3fa6cc"/><path d="M1652.0 311.99999999999994 L1641.4 318.49999999999994 L1641.4 330.99999999999994 L1652.0 322.99999999999994 Z" fill="#bccbdd"/>
<path d="M1640.5 337.4 L1651.7 343.09999999999997 L1640.5 348.79999999999995 L1629.3 343.09999999999997 Z" fill="#c3d1e0"/><path d="M1629.0 344.99999999999994 L1639.6 351.49999999999994 L1639.6 363.99999999999994 L1629.0 355.99999999999994 Z" fill="#b4c6da"/><path d="M1652.0 344.99999999999994 L1641.4 351.49999999999994 L1641.4 363.99999999999994 L1652.0 355.99999999999994 Z" fill="#3fa6cc"/>
<path d="M1640.5 396.8 L1651.7 391.1 L1640.5 385.40000000000003 L1629.3 391.1 Z" fill="#3fa6cc"/>
<path d="M1629.0 389.20000000000005 L1639.6 382.70000000000005 L1639.6 370.20000000000005 L1629.0 378.20000000000005 Z" fill="#b4c6da"/>
<path d="M1652.0 389.20000000000005 L1641.4 382.70000000000005 L1641.4 370.20000000000005 L1652.0 378.20000000000005 Z" fill="#bccbdd"/>
<path d="M1638.8 411.8 C1636.5 408.6 1631.5 409.2 1629.4 412.8 C1627.4 416.2 1628 423 1630.6 427.2 C1632 429.4 1635.5 428.4 1638.8 426.8 C1642 425.2 1645.5 426.2 1648 427.8 C1650.6 429.2 1652 426.4 1651.8 422 C1651.6 417 1650.8 412.4 1648 410.4 C1645 408.4 1641.5 409.4 1640.4 412.6" fill="#9ccfee" stroke="#3a4650" stroke-width="1.1" stroke-linejoin="round"/>
<rect x="1642.4" y="405.4" width="10.6" height="11.2" fill="#fde4e6" stroke="#d21f30" stroke-width="1.3"/>
<path d="M1644.6 407.2 L1646.2 407.2 L1646.4 409.2 L1649 409.2 L1649.2 407.2 L1650.8 407.2 L1650.8 414.8 L1649.4 414.8 C1649 412.6 1646.4 412.6 1646 414.8 L1644.6 414.8 Z" fill="#d83040"/>
<path d="M1631.8 443.2 C1636 439.4 1646 439.6 1650 443.6 L1647.6 452 C1648.4 456 1649.6 460 1650.4 462.6 C1647.8 461.4 1645.6 459.6 1644.6 457.4 C1641.6 457 1638.6 457.4 1636.4 458.6 C1635.4 461 1633.4 463 1631 463.6 C1629.8 462.4 1629.8 460.6 1630.6 458.4 C1632 455.4 1633 452 1633 449 Z" fill="#3ea8d6" stroke="#2a86b4" stroke-width="0.7"/>
<path d="M1633 449 C1637 447 1644 447.2 1647.6 452 L1644.6 457.4 C1641.6 457 1638.6 457.4 1636.4 458.6 Z" fill="#6cc2e6"/>
<path d="M1631.8 443.2 C1636 446.4 1646 446.4 1650 443.6 C1646 439.6 1636 439.4 1631.8 443.2 Z" fill="#58b8e0"/>
<path d="M1636.3999999999999 471.6 L1644.8 471.6 L1640.6 476.1 Z" fill="#0a0a0a"/>
<defs><linearGradient id="gdh" x1="0" y1="0" x2="0" y2="1"><stop offset="0" stop-color="#5d8fd8"/><stop offset="1" stop-color="#9dbdee"/></linearGradient></defs>
<path d="M1627.4 485.6 C1631 482.6 1649.4 482.6 1653 485.6 L1653 497.4 C1652.4 504.6 1646.6 509.6 1640.2 509.6 C1633.8 509.6 1628 504.6 1627.4 497.4 Z" fill="url(#gdh)" stroke="#3e6fc0" stroke-width="1"/>
<circle cx="1640.3" cy="496.8" r="9.8" fill="#b4ccf2" stroke="#4a7acc" stroke-width="0.8"/>
<circle cx="1640.3" cy="496.8" r="6.6" fill="#fafafa" stroke="#3e6fc0" stroke-width="1.2"/>
<circle cx="1640.3" cy="488.8" r="0.7" fill="#2a4f9a"/>
<circle cx="1640.3" cy="504.8" r="0.7" fill="#2a4f9a"/>
<circle cx="1632.4" cy="496.8" r="0.7" fill="#2a4f9a"/>
<circle cx="1648.2" cy="496.8" r="0.7" fill="#2a4f9a"/>
<path d="M1636.3999999999999 516.2 L1644.8 516.2 L1640.6 520.7 Z" fill="#0a0a0a"/>
<rect x="1637" y="529" width="7" height="23" rx="1.5" fill="#d9b274" stroke="#a88a58" stroke-width="0.6"/>
<path d="M1640.4 533.4 C1637 530.4 1631.6 531.6 1629.4 535.4 C1627.4 539.4 1628 545.6 1630.8 549.4 C1633 551.6 1637.6 551 1640.4 548.4 C1643.2 551 1647.8 551.6 1650 549.4 C1652.8 545.6 1653.4 539.4 1651.4 535.4 C1649.2 531.6 1643.8 530.4 1640.4 533.4 Z" fill="#a9d2e0" fill-opacity="0.85" stroke="#7f9099" stroke-width="0.9"/>
<rect x="1637.6" y="533.6" width="5.6" height="14.8" fill="#8fbcc8" opacity="0.8"/>
<text x="1645.9" y="570" text-anchor="middle" font-family="Liberation Sans, sans-serif" font-size="8.2" font-weight="bold" fill="#16169c">NC</text>
<path d="M1628.8 578.2 L1628.8 568.7" stroke="#1030e0" stroke-width="1.8"/><path d="M1626.6 569.6 L1628.8 565.0 L1631.0 569.6 Z" fill="#1030e0"/><path d="M1628.8 578.2 L1637.2 573.6" stroke="#22b040" stroke-width="2"/><path d="M1635.3999999999999 572.4000000000001 L1639.6 572.2 L1637.2 575.6 Z" fill="#22b040"/><path d="M1628.8 578.2 L1638.3999999999999 583.6" stroke="#e82828" stroke-width="1.8"/><path d="M1638.3999999999999 581.0 L1642.0 585.6 L1636.3999999999999 585.2 Z" fill="#e82828"/>
<path d="M1636.6 594.6 C1638.5 593.6 1643.2 593.6 1645 594.6 L1646.6 606 C1647 608.6 1648.6 610 1649.4 611.4 L1646.2 613 L1634.8 613 L1632 611.4 C1633 610 1634.6 608.6 1635 606 Z" fill="#9ccbe4" stroke="#7fb0cc" stroke-width="0.7"/>
<rect x="1639" y="595.4" width="3.6" height="16" fill="#7f9aa6"/>
<path d="M1635.4 612.6 L1645.8 612.6 L1644.8 620.6 L1636.4 620.6 Z" fill="#f4b820" stroke="#c8941a" stroke-width="0.6"/>
<rect x="1627.2" y="627.4" width="24.4" height="22.2" rx="1.2" fill="#2a7fc0"/>
<rect x="1627.2" y="630.6" width="24.4" height="0.8" fill="#1d5f96"/>
<text x="1637.8" y="638.4" text-anchor="middle" font-family="Liberation Sans, sans-serif" font-size="5.8" font-weight="bold" fill="#fff">WN</text>
<text x="1637.8" y="645.8" text-anchor="middle" font-family="Liberation Sans, sans-serif" font-size="5.8" font-weight="bold" fill="#fff">DATA</text>
<path d="M1640.6 650.4 C1643.6 645.4 1650.8 645.4 1653.8 650.4 C1650.8 655.2 1643.6 655.2 1640.6 650.4 Z" fill="#f4f8fc" stroke="#3b7fc4" stroke-width="1"/><circle cx="1647.2" cy="650.3" r="2.2" fill="none" stroke="#3b7fc4" stroke-width="0.9"/><circle cx="1647.2" cy="650.3" r="0.7" fill="#3b7fc4"/>
<path d="M1636.3999999999999 660.5 L1644.8 660.5 L1640.6 665.0 Z" fill="#0a0a0a"/>
<path d="M1635.2 675 C1633 672.4 1629 673 1627.6 676 C1626.4 679 1627.4 684.4 1629.6 687.2 C1631 688.4 1633 687.6 1635 686.2 L1641.4 686.2 L1642.4 677.6 C1641.8 673.4 1637.4 672 1635.2 675 Z" fill="#a7d3ee" stroke="#7aa7c4" stroke-width="0.8"/>
<path d="M1634 698.6 L1634 690 L1632.6 690 L1634.6 686.4 L1636.6 690 L1635.4 690 L1635.4 698.6 Z M1636.6 698 L1636.6 691 L1638 691 L1638 698 Z" fill="#d8607a"/>
<circle cx="1645.6" cy="688.2" r="8.2" fill="#e8000f"/><rect x="1644.3" y="686.4" width="2.7" height="7" fill="#fff"/><circle cx="1645.65" cy="683.4" r="1.6" fill="#fff"/>
<path d="M1636.3999999999999 706 L1644.8 706 L1640.6 710.5 Z" fill="#0a0a0a"/>
<defs><pattern id="spk" width="9" height="9" patternUnits="userSpaceOnUse"><rect width="9" height="9" fill="#f5e2d0"/><circle cx="2.1" cy="4.9" r="0.39" fill="#e2b48c"/><circle cx="4.3" cy="5.2" r="0.45" fill="#fbf3ea"/><circle cx="2.3" cy="2.1" r="0.55" fill="#fbf3ea"/><circle cx="4.9" cy="4.9" r="0.40" fill="#ecc9a8"/><circle cx="2.1" cy="1.4" r="0.53" fill="#fbf3ea"/><circle cx="6.7" cy="6.0" r="0.32" fill="#e2b48c"/><circle cx="0.4" cy="7.0" r="0.51" fill="#fff"/><circle cx="4.3" cy="6.5" r="0.52" fill="#fbf3ea"/><circle cx="3.6" cy="7.2" r="0.41" fill="#ecc9a8"/><circle cx="7.9" cy="0.9" r="0.33" fill="#ecc9a8"/><circle cx="2.3" cy="6.0" r="0.49" fill="#fff"/><circle cx="3.8" cy="7.5" r="0.44" fill="#e2b48c"/><circle cx="5.3" cy="5.3" r="0.53" fill="#e6bd98"/><circle cx="7.7" cy="8.9" r="0.47" fill="#ecc9a8"/><circle cx="6.3" cy="2.9" r="0.44" fill="#e2b48c"/><circle cx="5.1" cy="6.4" r="0.35" fill="#e2b48c"/><circle cx="2.4" cy="1.1" r="0.42" fill="#fbf3ea"/><circle cx="0.8" cy="7.2" r="0.40" fill="#ecc9a8"/><circle cx="0.2" cy="3.8" r="0.40" fill="#e6bd98"/><circle cx="0.4" cy="5.5" r="0.31" fill="#e2b48c"/><circle cx="3.0" cy="7.9" r="0.55" fill="#e2b48c"/><circle cx="2.1" cy="0.3" r="0.30" fill="#e6bd98"/><circle cx="5.4" cy="0.3" r="0.35" fill="#fbf3ea"/><circle cx="2.6" cy="2.4" r="0.47" fill="#fff"/><circle cx="2.8" cy="8.6" r="0.52" fill="#fbf3ea"/><circle cx="3.4" cy="7.8" r="0.40" fill="#e2b48c"/><circle cx="6.1" cy="0.9" r="0.54" fill="#e2b48c"/><circle cx="2.4" cy="5.7" r="0.48" fill="#fff"/><circle cx="3.9" cy="2.3" r="0.38" fill="#fff"/><circle cx="0.1" cy="3.7" r="0.44" fill="#e6bd98"/><circle cx="3.4" cy="5.3" r="0.33" fill="#fff"/><circle cx="4.2" cy="6.1" r="0.39" fill="#fff"/><circle cx="6.6" cy="0.2" r="0.32" fill="#e6bd98"/><circle cx="8.7" cy="2.3" r="0.41" fill="#e2b48c"/></pattern></defs>
<circle cx="1639" cy="730.4" r="11.8" fill="url(#spk)"/>
<path d="M1645.2 716 L1653 716 L1652.2 722.5 L1651.2 733 L1647.6 733 L1646.8 722.5 Z" fill="#a8c9e2"/>
<path d="M1636.3999999999999 750.6 L1644.8 750.6 L1640.6 755.1 Z" fill="#d2d2d2"/>
<path d="M1637.4 765.6 C1635 762.2 1629.6 762.8 1627.6 766.4 C1625.8 770 1626.4 775.4 1628.6 778.2 C1630.6 779.6 1633.6 778.2 1636.2 777 C1639 775.8 1641.8 776.8 1643.6 778 C1645.8 778.8 1647.2 776 1647 772 C1646.8 768 1646 764.8 1643.6 763.4 C1641.2 762.2 1638.8 763.2 1637.8 765.4 Z" fill="#b5d6e6" stroke="#3c4650" stroke-width="1.1" stroke-linejoin="round"/>
<path d="M1637.4 784 C1641 778.2 1649.6 778.2 1653.2 784 C1649.6 789.6 1641 789.6 1637.4 784 Z" fill="#eef5fb" stroke="#3b7fc4" stroke-width="1.1"/><circle cx="1645.3" cy="783.9" r="2.7" fill="none" stroke="#3b7fc4" stroke-width="1"/><circle cx="1645.3" cy="783.9" r="0.8" fill="#3b7fc4"/>
<path d="M1636.3999999999999 795.8 L1644.8 795.8 L1640.6 800.3 Z" fill="#0a0a0a"/>
</svg>
<!--/RTB-->
<div id="taskbar" class="abs"></div>
<!--TASKBAR-->
<svg class="abs" style="left:0;top:902px" width="1677" height="41" viewBox="0 902 1677 41">
<defs><linearGradient id="gw" x1="0" y1="0" x2="1" y2="1"><stop offset="0" stop-color="#35b0f6"/><stop offset="1" stop-color="#1479d8"/></linearGradient>
<linearGradient id="gfo" x1="0" y1="0" x2="0" y2="1"><stop offset="0" stop-color="#ffd866"/><stop offset="1" stop-color="#f5b73a"/></linearGradient></defs>
<rect x="899" y="906" width="32.5" height="32.5" rx="3.5" fill="#f9f9f9" stroke="#e6e6e6" stroke-width="0.8"/>
<rect x="712.6" y="912" width="9.8" height="9.8" rx="0.6" fill="url(#gw)"/>
<rect x="723.6" y="912" width="9.8" height="9.8" rx="0.6" fill="url(#gw)"/>
<rect x="712.6" y="923" width="9.8" height="9.8" rx="0.6" fill="url(#gw)"/>
<rect x="723.6" y="923" width="9.8" height="9.8" rx="0.6" fill="url(#gw)"/>
<circle cx="761.7" cy="922.2" r="10.6" fill="#fff"/>
<path d="M761.7 922.2 L752.52 916.90 A10.6 10.6 0 0 1 770.88 916.90 Z" fill="#e33b2e"/>
<path d="M761.7 922.2 L770.88 916.90 A10.6 10.6 0 0 1 761.70 932.80 Z" fill="#fbc116"/>
<path d="M761.7 922.2 L761.70 932.80 A10.6 10.6 0 0 1 752.52 916.90 Z" fill="#2da44e"/>
<circle cx="761.7" cy="922.2" r="4.9" fill="#fff"/><circle cx="761.7" cy="922.2" r="3.9" fill="#4a86e8"/>
<path d="M790 914.2 C790 913.2 790.6 912.6 791.6 912.6 L797.2 912.6 L799.4 914.8 L809.4 914.8 C810.4 914.8 811 915.4 811 916.4 L811 918 L790 918 Z" fill="#e8a21c"/>
<rect x="790" y="916.2" width="21" height="14.8" rx="1.4" fill="url(#gfo)"/>
<rect x="794.2" y="926" width="12.6" height="5" rx="0.8" fill="#1b74d4"/><rect x="794.2" y="929.6" width="12.6" height="1.4" fill="#1460b8"/>
<ellipse cx="835.4" cy="920.4" rx="7.8" ry="6.6" fill="#2fd15a"/><path d="M830.4 925 L829.4 928.6 L833.6 926.4 Z" fill="#2fd15a"/>
<ellipse cx="842.6" cy="925.6" rx="5.8" ry="4.9" fill="#e9ece9" stroke="#d8dcd8" stroke-width="0.4"/><path d="M846 929.2 L847 931.6 L844 930.2 Z" fill="#e9ece9"/>
<circle cx="840.6" cy="924.4" r="0.8" fill="#9aa09a"/><circle cx="844.6" cy="924.4" r="0.8" fill="#9aa09a"/>
<rect x="866.6" y="911.8" width="20.4" height="20.4" rx="4.6" fill="#b4de58"/>
<path d="M871.4 916.4 L882.2 927.6 M882.2 916.4 L871.4 927.6" stroke="#141a08" stroke-width="4.6" stroke-linecap="round"/>
<rect x="904.6" y="911.8" width="20.8" height="20.4" rx="4.6" fill="#b4de58"/>
<path d="M909.6 916 L912.4 917 L915 915.6 L917.6 917 L920.4 916 L919.6 919 L920.8 921.4 L919.6 923.6 L920.6 926 L918 928.6 L915 927.8 L912 928.6 L909.4 926 L910.4 923.6 L909.2 921.4 L910.4 919 Z" fill="#1c2a10"/>
<rect x="908.4" y="936.4" width="13.6" height="2.4" rx="1.2" fill="#1a73d8"/>
<path d="M944.6 917.4 C946 913.4 950.6 911.6 954.6 912.6 C953.6 913.4 953.4 914 953.6 914.6 C958.6 914.6 962.4 918.6 962.2 923.4 C962 928.4 958.2 931.6 953.4 931.6 C948.6 931.6 945.4 928.4 945.4 924.4 C945.4 922.4 946 920.6 947 919.4 C946 919 945 918.4 944.6 917.4 Z" fill="#2b2f33"/>
<ellipse cx="953.8" cy="924.6" rx="5.9" ry="4.7" fill="#eef4f6"/><circle cx="951.2" cy="924.6" r="2.2" fill="#36c6c6"/><circle cx="956.6" cy="924.6" r="2.2" fill="#36c6c6"/><circle cx="951.2" cy="924.6" r="0.9" fill="#1c2a30"/><circle cx="956.6" cy="924.6" r="0.9" fill="#1c2a30"/>
<rect x="759.1" y="936.6" width="5.2" height="2" rx="1" fill="#8c8c8c"/>
<rect x="797.6999999999999" y="936.6" width="5.2" height="2" rx="1" fill="#8c8c8c"/>
<rect x="835.6999999999999" y="936.6" width="5.2" height="2" rx="1" fill="#8c8c8c"/>
<rect x="874.1999999999999" y="936.6" width="5.2" height="2" rx="1" fill="#8c8c8c"/>
<rect x="950.6999999999999" y="936.6" width="5.2" height="2" rx="1" fill="#8c8c8c"/>
<path d="M1337.4 924.4 L1341.8 919.8 L1346.2 924.4" stroke="#222" stroke-width="1.5" fill="none" stroke-linecap="round" stroke-linejoin="round"/>
<path d="M1363.6 919.6 C1364.6 916.6 1368 915.4 1371 916 C1374.6 916.4 1376.6 919.4 1376.4 922.4 C1376.2 925.8 1373.4 927.8 1370 927.8 C1366.8 927.8 1364.4 925.8 1364.4 923 C1364.4 921.8 1364.8 921 1365.4 920.4 Z" fill="#2b2f33"/><ellipse cx="1370.2" cy="923.4" rx="4.2" ry="3.1" fill="#e4f2f2"/><circle cx="1368.4" cy="923.4" r="1.4" fill="#36c6c6"/><circle cx="1372.2" cy="923.4" r="1.4" fill="#36c6c6"/>
<ellipse cx="1394.8" cy="920.4" rx="4.8" ry="4.2" fill="#2fd15a"/><ellipse cx="1399.6" cy="923.6" rx="3.6" ry="3" fill="#dfe5df"/><path d="M1392 923.4 L1391.2 926 L1394 924.4 Z" fill="#2fd15a"/>
<rect x="1422.6" y="915.2" width="5.6" height="9.8" rx="2.8" fill="#3b74d4"/><path d="M1420.4 921.4 C1420.4 927.6 1430.4 927.6 1430.4 921.4 M1425.4 926.2 V929" stroke="#3b74d4" stroke-width="1.2" fill="none" stroke-linecap="round"/>
<rect x="1448.4" y="918" width="11.6" height="7.2" rx="1" fill="none" stroke="#444" stroke-width="1.1"/><path d="M1454.2 915 V929.2 M1452.6 921.6 H1455.8" stroke="#444" stroke-width="1.3"/>
<path d="M1480.4 917.2 L1491.8 915 L1493.6 926.4 L1482 928.8 Z" fill="#ee5a1e"/><text x="1486.8" y="926.2" text-anchor="middle" font-family="Liberation Sans, sans-serif" font-size="11" font-weight="bold" font-style="italic" fill="#fff">S</text>
<path d="M1513.2 919.8 C1516.8 915.8 1522.4 915.8 1526 919.8 M1515.4 922.2 C1517.8 919.6 1521.4 919.6 1523.8 922.2 M1517.4 924.4 C1518.6 923.2 1520.6 923.2 1521.8 924.4" stroke="#222" stroke-width="1.3" fill="none" stroke-linecap="round"/><circle cx="1519.6" cy="926.4" r="1" fill="#222"/>
<path d="M1534 920 H1536.4 L1539.6 917 V927 L1536.4 924 H1534 Z" fill="none" stroke="#222" stroke-width="1.1" stroke-linejoin="round"/><path d="M1541.6 919.6 C1543 921 1543 923 1541.6 924.4 M1543.6 917.8 C1546 920.2 1546 923.8 1543.6 926.2" stroke="#222" stroke-width="1" fill="none" stroke-linecap="round"/>
<rect x="1554.4" y="918.2" width="12.4" height="7.6" rx="1.4" fill="#222"/><rect x="1567" y="920.4" width="1.6" height="3.2" rx="0.6" fill="#222"/><path d="M1556 915.6 L1560 918 L1557 918.4 Z" fill="#222"/>
<path d="M1645.4 925.6 C1646.8 924.4 1646.8 922.4 1646.8 920.8 C1646.8 918.4 1648.4 916.6 1650.6 916.6 C1652.8 916.6 1654.4 918.4 1654.4 920.8 C1654.4 922.4 1654.4 924.4 1655.8 925.6 Z" fill="none" stroke="#222" stroke-width="1.1" stroke-linejoin="round"/><path d="M1649.2 927 C1649.6 928.4 1651.6 928.4 1652 927" stroke="#222" stroke-width="1.1" fill="none"/>
<text x="1637.4" y="919.2" text-anchor="end" font-family="Liberation Sans, sans-serif" font-size="10.4" fill="#1a1a1a">15:23</text>
<text x="1637.4" y="932.8" text-anchor="end" font-family="Liberation Sans, sans-serif" font-size="10.6" fill="#1a1a1a" letter-spacing="0.15">2024/10/11</text>
</svg>
<!--/TASKBAR-->
<div class="abs" style="left:1675px;top:0;width:2px;height:943px;background:#000"></div>
<div id="overlay" class="abs"><span id="ov0" style="left:-2.5px">)</span><span id="ov1" style="left:8.6px">(关键帧)</span><span id="ov2" style="left:71.8px;transform:scaleX(0.83)">(14%)</span></div>
</div>
</body>
</html>
